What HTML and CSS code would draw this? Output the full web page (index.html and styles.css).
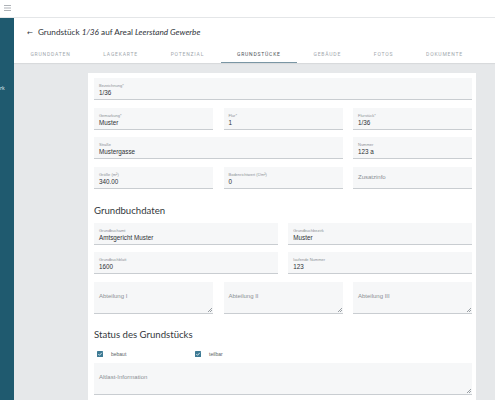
FILE: index.html
```html
<!DOCTYPE html>
<html lang="de">
<head>
<meta charset="utf-8">
<title>Grundstück 1/36</title>
<link rel="stylesheet" href="styles.css">
</head>
<body>
<div class="topbar">
  <svg class="hamburger" width="7" height="6" viewBox="0 0 7 6"><path d="M0 0.5H7M0 3H7M0 5.5H7" stroke="#9aa0a6" stroke-width="0.8"/></svg>
</div>
<div class="layout">
  <aside class="sidebar">
    <span class="nav-item">rk</span>
  </aside>
  <main class="main">
    <header class="page-header">
      <h1 class="title"><span class="back">←</span>Grundstück <em>1/36</em> auf Areal <em>Leerstand Gewerbe</em></h1>
      <nav class="tabs">
        <span class="tab">Grunddaten</span>
        <span class="tab">Lagekarte</span>
        <span class="tab">Potenzial</span>
        <span class="tab active">Grundstücke</span>
        <span class="tab">Gebäude</span>
        <span class="tab">Fotos</span>
        <span class="tab">Dokumente</span>
      </nav>
    </header>
    <section class="content">
      <div class="card">
        <div class="row cols-1">
          <div class="field"><span class="label">Bezeichnung*</span><span class="value">1/36</span></div>
        </div>
        <div class="row cols-3">
          <div class="field"><span class="label">Gemarkung*</span><span class="value">Muster</span></div>
          <div class="field"><span class="label">Flur*</span><span class="value">1</span></div>
          <div class="field"><span class="label">Flurstück*</span><span class="value">1/36</span></div>
        </div>
        <div class="row cols-3">
          <div class="field span-2"><span class="label">Straße</span><span class="value">Mustergasse</span></div>
          <div class="field"><span class="label">Nummer</span><span class="value">123 a</span></div>
        </div>
        <div class="row cols-3">
          <div class="field"><span class="label">Größe (m²)</span><span class="value">340.00</span></div>
          <div class="field"><span class="label">Bodenrichtwert (€/m²)</span><span class="value">0</span></div>
          <div class="field empty"><span class="placeholder">Zusatzinfo</span></div>
        </div>

        <h2 class="section-title">Grundbuchdaten</h2>
        <div class="row cols-2">
          <div class="field"><span class="label">Grundbuchamt</span><span class="value">Amtsgericht Muster</span></div>
          <div class="field"><span class="label">Grundbuchbezirk</span><span class="value">Muster</span></div>
        </div>
        <div class="row cols-2">
          <div class="field"><span class="label">Grundbuchblatt</span><span class="value">1600</span></div>
          <div class="field"><span class="label">laufende Nummer</span><span class="value">123</span></div>
        </div>
        <div class="row cols-3">
          <div class="textarea"><span class="placeholder">Abteilung I</span></div>
          <div class="textarea"><span class="placeholder">Abteilung II</span></div>
          <div class="textarea"><span class="placeholder">Abteilung III</span></div>
        </div>

        <h2 class="section-title status">Status des Grundstücks</h2>
        <div class="checks">
          <label class="check"><svg class="box" width="6" height="6" viewBox="0 0 6 6"><rect width="6" height="6" rx="0.6" fill="#3d7a94"/><path d="M1.3 3.1L2.5 4.3L4.8 1.8" fill="none" stroke="#fff" stroke-width="0.8"/></svg><span>bebaut</span></label>
          <label class="check"><svg class="box" width="6" height="6" viewBox="0 0 6 6"><rect width="6" height="6" rx="0.6" fill="#3d7a94"/><path d="M1.3 3.1L2.5 4.3L4.8 1.8" fill="none" stroke="#fff" stroke-width="0.8"/></svg><span>teilbar</span></label>
        </div>
        <div class="row cols-1">
          <div class="textarea"><span class="placeholder">Altlast-Information</span></div>
        </div>
      </div>
    </section>
  </main>
</div>
</body>
</html>
```
FILE: styles.css
```css
* { box-sizing: border-box; }
html, body { margin: 0; padding: 0; }
body {
  width: 495px;
  height: 400px;
  overflow: hidden;
  font-family: "Liberation Sans", Arial, sans-serif;
  background: #ffffff;
  color: #2d3135;
}

.topbar {
  height: 18px;
  border-bottom: 1px solid #e4e6e8;
  background: #fff;
  display: flex;
  align-items: center;
  padding-left: 4px;
}
.hamburger { display: block; margin-top: -2px; }

.layout {
  display: flex;
  height: 382px;
}
.sidebar {
  width: 14px;
  flex: 0 0 14px;
  background: #1f5a6f;
  overflow: hidden;
  padding-top: 66px;
  display: flex;
  flex-direction: column;
}
.nav-item {
  color: #e6eef2;
  font-family: "Open Sans", sans-serif;
  font-size: 5px;
  line-height: 8px;
}

.main {
  flex: 1;
  display: flex;
  flex-direction: column;
  background: #e6e8ea;
  min-width: 0;
}
.page-header {
  background: #fff;
  height: 45px;
  display: flex;
  flex-direction: column;
  box-shadow: 0 1px 1px rgba(0,0,0,0.06);
}
.title {
  margin: 0;
  height: 27px;
  padding-top: 9px;
  padding-left: 13px;
  font-family: Lato, "Open Sans", sans-serif;
  font-weight: 400;
  font-size: 8.2px;
  line-height: 10px;
  color: #30343a;
}
.title em { font-style: italic; }
.back {
  display: inline-block;
  margin-right: 5px;
  font-family: "DejaVu Sans", sans-serif;
  font-size: 7px;
}

.tabs {
  display: flex;
  height: 18px;
  align-items: stretch;
}
.tab {
  padding: 1px 16.4px 0 16.4px;
  display: flex;
  align-items: center;
  text-transform: uppercase;
  font-family: Roboto, "Open Sans", sans-serif;
  font-size: 5px;
  letter-spacing: 0.8px;
  color: #a1a7ad;
  border-bottom: 1.5px solid transparent;
}
.tab.active {
  color: #4d5358;
  border-bottom-color: #7a96a4;
}

.content {
  flex: 1;
  padding: 10px 19px 0 74px;
  overflow: hidden;
}
.card {
  background: #fff;
  width: 388px;
  height: 400px;
  padding: 5px 4px 0 6px;
}

.row {
  display: grid;
  column-gap: 10.5px;
  margin-bottom: 7.5px;
}
.cols-1 { grid-template-columns: 1fr; }
.cols-2 { grid-template-columns: 1fr 1fr; }
.cols-3 { grid-template-columns: 1fr 1fr 1fr; }
.span-2 { grid-column: span 2; }

.field {
  height: 22px;
  background: #f6f7f8;
  border-bottom: 1px solid #c9cdd1;
  padding: 5px 5px 0 5px;
  display: flex;
  flex-direction: column;
}
.label {
  font-size: 4px;
  line-height: 5px;
  color: #8c9196;
  white-space: nowrap;
}
.value {
  font-size: 6.3px;
  line-height: 9px;
  color: #2e3236;
  white-space: nowrap;
}
.field.empty {
  padding-top: 0;
  justify-content: center;
}
.placeholder {
  display: block;
  font-size: 6px;
  line-height: 8px;
  color: #8a8f94;
  white-space: nowrap;
}

.textarea {
  position: relative;
  height: 32px;
  background: #f6f7f8;
  border-bottom: 1px solid #c9cdd1;
  padding: 10px 5px 0 5px;
}
.textarea::after {
  content: "";
  position: absolute;
  right: 1px;
  bottom: 1px;
  width: 4px;
  height: 4px;
  background: linear-gradient(135deg, transparent 0 45%, #9aa0a5 45% 55%, transparent 55% 70%, #9aa0a5 70% 80%, transparent 80%);
}

.section-title {
  margin: 15px 0 5px 0;
  font-family: Lato, "Open Sans", sans-serif;
  font-weight: 400;
  font-size: 9.6px;
  line-height: 14px;
  color: #34383d;
}
.section-title.status { margin-top: 14px; margin-bottom: 7.5px; }

.checks {
  display: flex;
  height: 10px;
  align-items: center;
  padding-left: 3px;
  margin-bottom: 4px;
}
.check {
  display: flex;
  align-items: center;
  width: 98px;
  font-size: 5px;
  color: #5a5f64;
}
.check .box { display: block; margin-right: 8px; }
```
